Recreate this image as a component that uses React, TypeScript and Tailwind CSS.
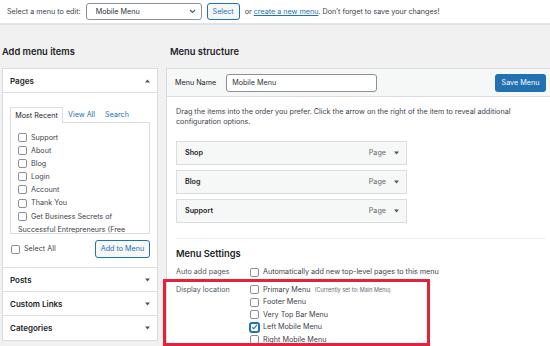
import React from "react";

const Cb = ({ checked }: { checked?: boolean }) =>
  checked ? (
    <span className="inline-flex w-[9px] h-[9px] shrink-0 rounded-[2px] border border-[#2271b1] shadow-[0_0_0_1px_#2271b1] bg-white items-center justify-center">
      <svg width="8" height="8" viewBox="0 0 8 8">
        <path d="M1.3 4.2 L3.2 6 L6.8 1.6" fill="none" stroke="#2271b1" strokeWidth="1.3" />
      </svg>
    </span>
  ) : (
    <span className="inline-block w-[9px] h-[9px] shrink-0 rounded-[2px] border border-[#8c8f94] bg-white" />
  );

const Down = ({ color = "#50575e" }: { color?: string }) => (
  <svg width="5" height="4" viewBox="0 0 5 4">
    <path d="M0 0.5 H5 L2.5 3.5 Z" fill={color} />
  </svg>
);

const Up = () => (
  <svg width="5" height="4" viewBox="0 0 5 4">
    <path d="M0 3.5 H5 L2.5 0.5 Z" fill="#50575e" />
  </svg>
);

const PageItem = ({ name }: { name: string }) => (
  <label className="flex items-center gap-[4px] h-[13.2px]">
    <Cb />
    <span>{name}</span>
  </label>
);

const Accordion = ({ title }: { title: string }) => (
  <div className="h-[24px] border-b border-[#dcdcde] flex items-center justify-between px-[7px] last:border-b-0">
    <span className="font-semibold text-[8px] text-[#1d2327]">{title}</span>
    <Down />
  </div>
);

const MenuItem = ({ name }: { name: string }) => (
  <div className="w-[231px] h-[24px] border border-[#dcdcde] bg-[#f6f7f7] flex items-center justify-between pl-[8px] pr-[7px]">
    <span className="font-semibold text-[#1d2327]">{name}</span>
    <span className="flex items-center gap-[8px] text-[#646970]">
      <span>Page</span>
      <Down />
    </span>
  </div>
);

const Loc = ({ label, checked, note }: { label: string; checked?: boolean; note?: string }) => (
  <label className="flex items-center gap-[4px] h-[12.5px]">
    <Cb checked={checked} />
    <span>{label}</span>
    {note && <span className="text-[5.5px] text-[#646970]">{note}</span>}
  </label>
);

export default function App() {
  return (
    <div className="w-[550px] h-[346px] overflow-hidden bg-[#f1f1f1] relative font-['Inter',sans-serif] text-[7.2px] text-[#3c434a] leading-[10px]">
      {/* top bar */}
      <div className="h-[25px] bg-white border-b-[2px] border-[#e2e4e7] flex items-center pl-[7px]">
        <span>Select a menu to edit:</span>
        <div className="ml-[5px] w-[116px] h-[17px] border border-[#8c8f94] rounded-[3px] bg-white flex items-center justify-between pl-[9px] pr-[5px] text-[#2c3338]">
          <span>Mobile Menu</span>
          <svg width="7" height="5" viewBox="0 0 7 5">
            <path d="M1 1 L3.5 3.5 L6 1" fill="none" stroke="#50575e" strokeWidth="1.1" />
          </svg>
        </div>
        <div className="ml-[5px] w-[33px] h-[17px] border border-[#2271b1] rounded-[3px] bg-[#f6f7f7] flex items-center justify-center text-[#2271b1]">
          Select
        </div>
        <span className="ml-[5px]">
          or <span className="text-[#2271b1] underline">create a new menu</span>. Don’t forget to save your changes!
        </span>
      </div>

      <div className="flex pl-[2px] pt-[20px]">
        {/* left column */}
        <div className="w-[156px] shrink-0">
          <div className="h-[14px] leading-[14px] text-[9.3px] font-semibold text-[#1d2327] mb-[9px]">Add menu items</div>
          <div className="bg-white border border-[#dcdcde]">
            <div className="h-[24px] border-b border-[#dcdcde] flex items-center justify-between px-[7px]">
              <span className="font-semibold text-[8px] text-[#1d2327]">Pages</span>
              <Up />
            </div>
            <div className="px-[7px] pt-[13px] pb-[9px] border-b border-[#dcdcde]">
              <div className="flex items-end h-[16px]">
                <div className="h-[16px] w-[53px] border border-b-0 border-[#dcdcde] bg-white flex items-center justify-center relative z-10 mb-[-1px] text-[#1d2327]">
                  Most Recent
                </div>
                <span className="h-[15px] flex items-center ml-[5px] text-[#2271b1]">View All</span>
                <span className="h-[15px] flex items-center ml-[10px] text-[#2271b1]">Search</span>
              </div>
              <div className="h-[112px] border border-[#dcdcde] overflow-hidden px-[7px] pt-[7.5px] leading-[13.2px]">
                <PageItem name="Support" />
                <PageItem name="About" />
                <PageItem name="Blog" />
                <PageItem name="Login" />
                <PageItem name="Account" />
                <PageItem name="Thank You" />
                <div>
                  <span className="inline-flex items-center gap-[4px] align-middle">
                    <Cb />
                    <span>Get Business Secrets of</span>
                  </span>
                  <br />
                  <span>Successful Entrepreneurs (Free</span>
                </div>
              </div>
              <div className="mt-[6px] flex items-center justify-between">
                <label className="flex items-center gap-[4px] ml-[1px]">
                  <Cb />
                  <span>Select All</span>
                </label>
                <div className="w-[55px] h-[18px] border border-[#2271b1] rounded-[3px] bg-[#f6f7f7] flex items-center justify-center text-[#2271b1]">
                  Add to Menu
                </div>
              </div>
            </div>
            <Accordion title="Posts" />
            <Accordion title="Custom Links" />
            <Accordion title="Categories" />
          </div>
        </div>

        {/* right column */}
        <div className="ml-[8px] w-[386px] shrink-0">
          <div className="h-[14px] leading-[14px] text-[9.3px] font-semibold text-[#1d2327] mb-[9px] pl-[4px]">Menu structure</div>
          <div className="bg-white border border-[#dcdcde] h-[300px]">
            <div className="h-[28px] bg-[#f6f7f7] border-b border-[#dcdcde] flex items-center justify-between pl-[8px] pr-[5px]">
              <div className="flex items-center">
                <span className="text-[#1d2327]">Menu Name</span>
                <div className="ml-[10px] w-[151px] h-[18px] border border-[#8c8f94] rounded-[3px] bg-white flex items-center pl-[5px] text-[#2c3338]">
                  Mobile Menu
                </div>
              </div>
              <div className="w-[51px] h-[18px] rounded-[3px] bg-[#2271b1] flex items-center justify-center text-white">
                Save Menu
              </div>
            </div>
            <div className="pl-[9px] pr-[5px] pt-[10px]">
              <p>
                Drag the items into the order you prefer. Click the arrow on the right of the item to reveal additional
                <br />
                configuration options.
              </p>
              <div className="mt-[14px] flex flex-col gap-[5px]">
                <MenuItem name="Shop" />
                <MenuItem name="Blog" />
                <MenuItem name="Support" />
              </div>
              <div className="mt-[15px] border-t border-[#f0f0f1]" />
              <div className="mt-[8px] h-[14px] leading-[14px] text-[9.3px] font-semibold text-[#1d2327]">Menu Settings</div>
              <div className="mt-[5px] flex">
                <div className="w-[74px] text-[#50575e] leading-[12.5px]">Auto add pages</div>
                <Loc label="Automatically add new top-level pages to this menu" />
              </div>
              <div className="mt-[5px] flex">
                <div className="w-[74px] text-[#50575e] leading-[12.5px]">Display location</div>
                <div className="flex flex-col">
                  <Loc label="Primary Menu" note="(Currently set to: Main Menu)" />
                  <Loc label="Footer Menu" />
                  <Loc label="Very Top Bar Menu" />
                  <Loc label="Left Mobile Menu" checked />
                  <Loc label="Right Mobile Menu" />
                </div>
              </div>
            </div>
          </div>
        </div>
      </div>

      {/* annotation box */}
      <div className="absolute left-[163px] top-[279px] w-[267px] h-[67px] border-[3px] border-[#e62239]" />
    </div>
  );
}
